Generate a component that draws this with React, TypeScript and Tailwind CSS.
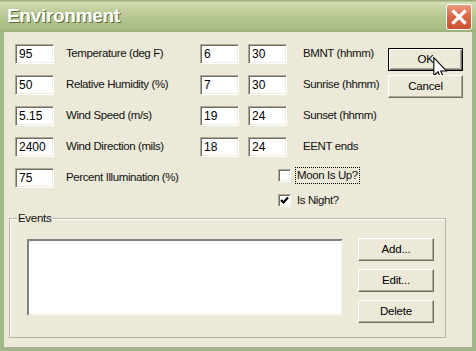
import React from "react";

const sunken =
  "bg-white border border-t-[#aca899] border-l-[#aca899] border-b-white border-r-white shadow-[inset_1px_1px_0_0_#716f64,inset_-1px_-1px_0_0_#f1efe2]";

function Box({ v }: { v: string }) {
  return (
    <div className={`w-[39px] h-[20px] flex items-center pl-[3px] text-[12px] text-black ${sunken}`}>
      {v}
    </div>
  );
}

function Btn({ label, w = "w-[75px]", isDefault = false, children }: { label: string; w?: string; isDefault?: boolean; children?: React.ReactNode }) {
  const cls = isDefault
    ? "border border-black shadow-[inset_1px_1px_0_0_#ffffff,inset_-1px_-1px_0_0_#716f64,inset_-2px_-2px_0_0_#aca899]"
    : "border border-t-white border-l-white border-b-[#716f64] border-r-[#716f64] shadow-[inset_-1px_-1px_0_0_#aca899]";
  return (
    <div className={`relative ${w} h-[23px] flex items-center justify-center bg-[#ece9d8] text-[11.5px] tracking-[-0.2px] text-black ${cls}`}>
      {label}
      {children}
    </div>
  );
}

function Check({ checked }: { checked: boolean }) {
  return (
    <div className={`w-[13px] h-[13px] flex items-center justify-center ${sunken}`}>
      {checked && (
        <svg width="9" height="9" viewBox="0 0 9 9">
          <path d="M1 4 L3.5 6.5 L8 1.5" fill="none" stroke="#000" strokeWidth="2.2" />
        </svg>
      )}
    </div>
  );
}

function Label({ text, w }: { text: string; w: string }) {
  return <div className={`${w} text-[11.5px] tracking-[-0.4px] text-[#111] whitespace-nowrap`}>{text}</div>;
}

export default function App() {
  return (
    <div
      className="w-[476px] h-[351px] flex flex-col overflow-hidden"
      style={{ fontFamily: '"Liberation Sans", Arial, sans-serif' }}
    >
      {/* Title bar */}
      <div className="h-[32px] shrink-0 flex items-center justify-between pl-[7px] pr-[4px] bg-[linear-gradient(180deg,#8fa46c_0%,#d3deb4_8%,#c2cf9e_30%,#b4c48e_60%,#abbc85_88%,#9cb079_100%)]">
        <span className="text-white font-bold text-[19px] tracking-[-0.3px] pt-[1px] [text-shadow:1px_1px_0_#5b6b3c]">
          Environment
        </span>
        <div className="w-[26px] h-[26px] mt-[2px] rounded-[3px] border border-white bg-[linear-gradient(180deg,#e99a7e_0%,#d96a48_45%,#c9522f_100%)] flex items-center justify-center">
          <svg width="24" height="24" viewBox="0 0 24 24">
            <path d="M6.5 6.5 L17.5 17.5 M17.5 6.5 L6.5 17.5" stroke="#fff" strokeWidth="3.2" strokeLinecap="square" />
          </svg>
        </div>
      </div>

      {/* Body */}
      <div className="flex-1 flex flex-col bg-[#ece9d8] border-l-4 border-r-4 border-b-4 border-[#a3b689] pl-[11px] pt-[12px]">
        <div className="flex">
          {/* Left rows */}
          <div className="flex flex-col gap-[11px]">
            {[
              ["95", "Temperature (deg F)", "6", "30", "BMNT (hhmm)"],
              ["50", "Relative Humidity (%)", "7", "30", "Sunrise (hhmm)"],
              ["5.15", "Wind Speed (m/s)", "19", "24", "Sunset (hhmm)"],
              ["2400", "Wind Direction (mils)", "18", "24", "EENT ends"],
            ].map((r) => (
              <div key={r[1]} className="flex items-center h-[20px]">
                <Box v={r[0]} />
                <div className="ml-[12px]">
                  <Label text={r[1]} w="w-[134px]" />
                </div>
                <Box v={r[2]} />
                <div className="ml-[9px]">
                  <Box v={r[3]} />
                </div>
                <div className="ml-[16px]">
                  <Label text={r[4]} w="w-[80px]" />
                </div>
              </div>
            ))}
            <div className="flex items-start">
              <div className="flex items-center h-[20px]">
                <Box v="75" />
                <div className="ml-[12px]">
                  <Label text="Percent Illumination (%)" w="w-[212px]" />
                </div>
              </div>
              <div className="flex flex-col gap-[8px] mt-[-1px]">
                <div className="flex items-center h-[17px]">
                  <Check checked={false} />
                  <div className="ml-[4px] h-[17px] px-[1px] flex items-center border border-dotted border-black">
                    <span className="text-[11.5px] tracking-[-0.4px] text-[#111]">Moon Is Up?</span>
                  </div>
                </div>
                <div className="flex items-center h-[17px]">
                  <Check checked={true} />
                  <span className="ml-[6px] text-[11.5px] tracking-[-0.4px] text-[#111]">Is Night?</span>
                </div>
              </div>
            </div>
          </div>
          {/* Right buttons */}
          <div className="ml-auto mr-[9px] mt-[4px] flex flex-col gap-[4px]">
            <Btn label="OK" isDefault>
              <svg className="absolute left-[44px] top-[8px]" width="15" height="23" viewBox="0 0 12 19">
                <path
                  d="M0.5 0.5 L0.5 15.5 L4 12.2 L6.4 18.2 L8.6 17.2 L6.2 11.5 L10.8 11.5 Z"
                  fill="#fff"
                  stroke="#000"
                  strokeWidth="0.9"
                  strokeLinejoin="miter"
                />
              </svg>
            </Btn>
            <Btn label="Cancel" />
          </div>
        </div>

        {/* Events group */}
        <fieldset className="mt-[2px] ml-[-6px] w-[437px] border border-[#b8b5a6] shadow-[inset_1px_1px_0_0_#ffffff] pl-[17px] pr-[10px] pt-[13px] pb-[14px]">
          <legend className="ml-[-10px] px-[1px] bg-[#ece9d8] text-[11.5px] leading-[14px] tracking-[-0.3px] text-[#111]">
            Events
          </legend>
          <div className="flex">
            <div className="mt-[1px] w-[316px] h-[77px] bg-white border-2 border-t-[#808080] border-l-[#808080] border-b-[#f1efe2] border-r-[#f1efe2]" />
            <div className="ml-[15px] flex flex-col gap-[8px]">
              <Btn label="Add..." w="w-[76px]" />
              <Btn label="Edit..." w="w-[76px]" />
              <Btn label="Delete" w="w-[76px]" />
            </div>
          </div>
        </fieldset>
      </div>
    </div>
  );
}
